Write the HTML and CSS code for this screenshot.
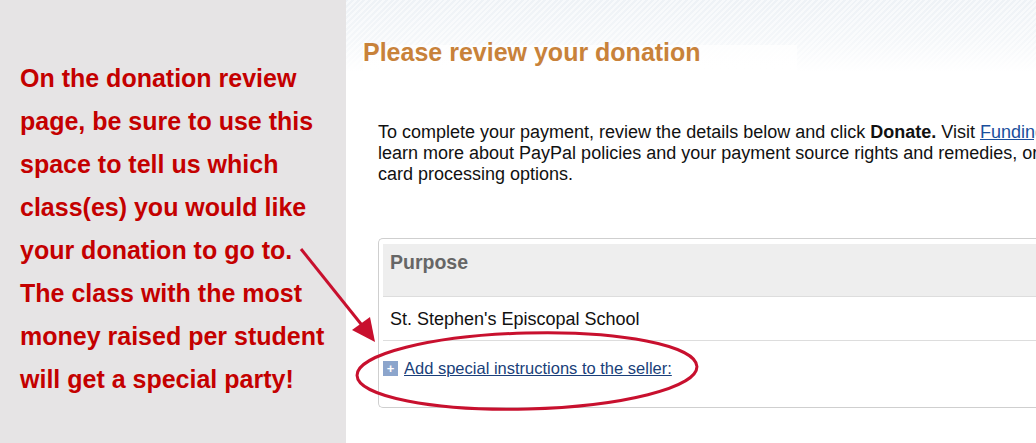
FILE: index.html
```html
<!DOCTYPE html>
<html>
<head>
<meta charset="utf-8">
<link rel="stylesheet" href="styles.css">
</head>
<body>
<div class="page">
  <aside class="note">
    <p>On the donation review<br>page, be sure to use this<br>space to tell us which<br>class(es) you would like<br>your donation to go to.<br>The class with the most<br>money raised per student<br>will get a special party!</p>
  </aside>
  <main class="main">
    <div class="heading"><h1>Please review your donation</h1></div>
    <div class="content">
      <p class="intro">To complete your payment, review the details below and click <b>Donate.</b> Visit <a href="#">Funding Sources</a> to<br>learn more about PayPal policies and your payment source rights and remedies, or to<br>card processing options.</p>
      <div class="box">
        <div class="box-head">Purpose</div>
        <div class="box-row">St. Stephen's Episcopal School</div>
        <div class="box-link">
          <span class="plus">+</span><a href="#">Add special instructions to the seller:</a>
        </div>
      </div>
    </div>
  </main>
  <svg class="annot" width="1036" height="443" viewBox="0 0 1036 443">
    <line x1="301" y1="249" x2="365" y2="329" stroke="#c8102e" stroke-width="3"/>
    <polygon points="375,342 352,330 370,317" fill="#c8102e"/>
    <ellipse cx="527" cy="371" rx="170" ry="38" transform="rotate(-1.5 527 371)" fill="none" stroke="#c8102e" stroke-width="3"/>
  </svg>
</div>
</body>
</html>
```
FILE: styles.css
```css
html, body { margin: 0; padding: 0; }
body { font-family: "Liberation Sans", Arial, sans-serif; background: #fff; }
.page { display: flex; width: 1036px; height: 443px; overflow: hidden; position: relative; }
.note { width: 346px; flex: none; background: #e6e4e5; box-sizing: border-box; padding: 57px 0 0 20px; }
.note p { margin: 0; color: #c40000; font-weight: bold; font-size: 25px; line-height: 43px; white-space: nowrap; }
.main { flex: 1; min-width: 0; overflow: hidden; position: relative; background:
  linear-gradient(to bottom, rgba(255,255,255,0) 0px, rgba(255,255,255,0.4) 40px, #fff 72px),
  repeating-linear-gradient(135deg, #eef2f6 0px, #eef2f6 2px, #f7f9fb 2px, #f7f9fb 4px); }
.heading { margin: 45px 0 0 17px; width: 434px; height: 26px; background: linear-gradient(to bottom, rgba(255,255,255,0.7), #fff); }
.heading h1 { margin: 0; font-size: 25px; line-height: 14px; color: #c8823a; font-weight: bold; }
.content { padding: 0 0 0 32px; }
.intro { margin: 51px 0 0; font-size: 18px; line-height: 21px; color: #111; white-space: nowrap; }
.intro a { color: #1a4f9c; }
.box { margin-top: 53px; border: 1px solid #cfcfcf; border-right: none; border-radius: 5px 0 0 5px; padding: 5px 0 0 4px; height: 170px; box-sizing: border-box; }
.box-head { background: #eeeeee; height: 53px; box-sizing: border-box; padding: 7px 0 0 7px; font-size: 19.5px; font-weight: bold; color: #666; border-bottom: 1px solid #ddd; }
.box-row { height: 44px; box-sizing: border-box; padding: 12px 0 0 7px; font-size: 18px; color: #111; border-bottom: 1px solid #ddd; }
.box-link { padding: 18px 0 0 0; font-size: 16.5px; display: flex; align-items: center; }
.box-link a { color: #1a3f7a; margin-left: 6px; }
.plus { display: inline-flex; width: 15px; height: 15px; background: #8ca5cc; color: #fff; font-size: 13px; font-weight: bold; align-items: center; justify-content: center; line-height: 1; }
.annot { position: absolute; left: 0; top: 0; pointer-events: none; }
```
